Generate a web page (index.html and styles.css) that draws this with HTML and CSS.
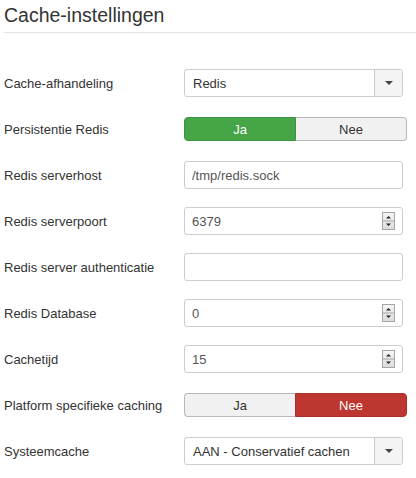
FILE: index.html
```html
<!DOCTYPE html>
<html>
<head>
<meta charset="utf-8">
<link rel="stylesheet" href="styles.css">
</head>
<body>
<div class="page">
  <div class="legend">Cache-instellingen</div>
  <div class="form">
    <div class="row">
      <div class="label">Cache-afhandeling</div>
      <div class="control">
        <div class="select"><span class="value">Redis</span><span class="drop"><span class="caret"></span></span></div>
      </div>
    </div>
    <div class="row">
      <div class="label">Persistentie Redis</div>
      <div class="control">
        <div class="toggle"><span class="seg on-yes">Ja</span><span class="seg off">Nee</span></div>
      </div>
    </div>
    <div class="row">
      <div class="label">Redis serverhost</div>
      <div class="control"><div class="input">/tmp/redis.sock</div></div>
    </div>
    <div class="row">
      <div class="label">Redis serverpoort</div>
      <div class="control"><div class="input number"><span>6379</span>
        <svg class="spin" width="13" height="18" viewBox="0 0 13 18"><defs><linearGradient id="g1" x1="0" y1="0" x2="0" y2="1"><stop offset="0" stop-color="#f6f6f6"/><stop offset="1" stop-color="#dcdcdc"/></linearGradient></defs><rect x="0.5" y="0.5" width="12" height="17" fill="url(#g1)" stroke="#a6a6a6"/><line x1="1" y1="9" x2="12" y2="9" stroke="#a6a6a6"/><path d="M4 6.5 L6.5 4 L9 6.5 Z" fill="#222"/><path d="M4 11.5 L6.5 14 L9 11.5 Z" fill="#222"/></svg>
      </div></div>
    </div>
    <div class="row">
      <div class="label">Redis server authenticatie</div>
      <div class="control"><div class="input"></div></div>
    </div>
    <div class="row">
      <div class="label">Redis Database</div>
      <div class="control"><div class="input number"><span>0</span>
        <svg class="spin" width="13" height="18" viewBox="0 0 13 18"><rect x="0.5" y="0.5" width="12" height="17" fill="url(#g1)" stroke="#a6a6a6"/><line x1="1" y1="9" x2="12" y2="9" stroke="#a6a6a6"/><path d="M4 6.5 L6.5 4 L9 6.5 Z" fill="#222"/><path d="M4 11.5 L6.5 14 L9 11.5 Z" fill="#222"/></svg>
      </div></div>
    </div>
    <div class="row">
      <div class="label">Cachetijd</div>
      <div class="control"><div class="input number"><span>15</span>
        <svg class="spin" width="13" height="18" viewBox="0 0 13 18"><rect x="0.5" y="0.5" width="12" height="17" fill="url(#g1)" stroke="#a6a6a6"/><line x1="1" y1="9" x2="12" y2="9" stroke="#a6a6a6"/><path d="M4 6.5 L6.5 4 L9 6.5 Z" fill="#222"/><path d="M4 11.5 L6.5 14 L9 11.5 Z" fill="#222"/></svg>
      </div></div>
    </div>
    <div class="row">
      <div class="label">Platform specifieke caching</div>
      <div class="control">
        <div class="toggle"><span class="seg off">Ja</span><span class="seg on-no">Nee</span></div>
      </div>
    </div>
    <div class="row">
      <div class="label">Systeemcache</div>
      <div class="control">
        <div class="select"><span class="value">AAN - Conservatief cachen</span><span class="drop"><span class="caret"></span></span></div>
      </div>
    </div>
  </div>
</div>
</body>
</html>
```
FILE: styles.css
```css
html, body {
  margin: 0;
  padding: 0;
  background: #fff;
}
body {
  font-family: "Liberation Sans", Arial, sans-serif;
  font-size: 13px;
  color: #333;
}
.page {
  padding-left: 4px;
}
.legend {
  font-size: 19.5px;
  line-height: 28px;
  color: #333;
  padding-top: 1px;
  padding-bottom: 3px;
  border-bottom: 1px solid #e5e5e5;
}
.form {
  padding-top: 36px;
}
.row {
  display: flex;
  align-items: center;
  height: 28px;
  margin-bottom: 18px;
}
.label {
  width: 180px;
  flex: none;
  color: #333;
}
.control {
  flex: none;
  display: flex;
  align-items: center;
}
.select {
  box-sizing: border-box;
  width: 219px;
  height: 28px;
  border: 1px solid #ccc;
  border-radius: 3px;
  display: flex;
  align-items: stretch;
  background: #fff;
  color: #333;
}
.select .value {
  flex: 1;
  padding-left: 8px;
  display: flex;
  align-items: center;
}
.select .drop {
  width: 27px;
  border-left: 1px solid #ccc;
  background: #f4f4f4;
  display: flex;
  align-items: center;
  justify-content: center;
  border-radius: 0 3px 3px 0;
}
.caret {
  width: 0;
  height: 0;
  border-left: 4px solid transparent;
  border-right: 4px solid transparent;
  border-top: 4px solid #444;
}
.toggle {
  display: flex;
  width: 223px;
  height: 24px;
}
.seg {
  box-sizing: border-box;
  flex: 1;
  display: flex;
  align-items: center;
  justify-content: center;
  font-size: 13px;
}
.seg:first-child {
  border-radius: 4px 0 0 4px;
}
.seg:last-child {
  border-radius: 0 4px 4px 0;
}
.seg.off {
  background: #f1f1f1;
  border: 1px solid #b8b8b8;
  color: #333;
}
.seg.off:first-child {
  border-right: none;
}
.seg.off:last-child {
  border-left: none;
}
.seg.on-yes {
  background: #46a546;
  border: 1px solid #3e933e;
  color: #fff;
}
.seg.on-no {
  background: #bd362f;
  border: 1px solid #a9302a;
  color: #fff;
}
.input {
  box-sizing: border-box;
  width: 219px;
  height: 28px;
  border: 1px solid #ccc;
  border-radius: 3px;
  padding-left: 7px;
  padding-right: 7px;
  color: #555;
  display: flex;
  align-items: center;
  background: #fff;
}
.input.number {
  justify-content: space-between;
}
.spin {
  display: block;
  margin-right: 0px;
}
```
